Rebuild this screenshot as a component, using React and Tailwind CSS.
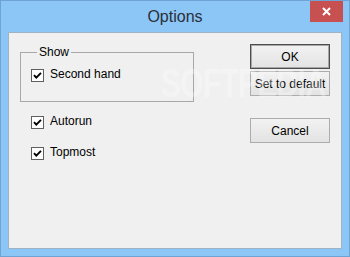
import React from "react";

function Check() {
  return (
    <span className="mt-[2px] flex h-[13px] w-[13px] shrink-0 items-center justify-center border border-[#5f5f5f] bg-white">
      <svg width="9" height="9" viewBox="0 0 9 9">
        <path d="M1 4.2 L3.3 6.6 L8 1.8" fill="none" stroke="#000" strokeWidth="1.9" />
      </svg>
    </span>
  );
}

function Row({ label }) {
  return (
    <div className="flex items-start gap-[6px] leading-[14px]">
      <Check />
      <span>{label}</span>
    </div>
  );
}

function Btn({ children, def }) {
  return (
    <div
      className={
        "flex h-[25px] w-[80px] items-center justify-center bg-gradient-to-b from-[#f2f2f2] to-[#e3e3e3] border " +
        (def ? "border-[#4d4d4d] shadow-[inset_0_0_0_1px_#a8a8a8]" : "border-[#acacac]")
      }
    >
      {children}
    </div>
  );
}

export default function App() {
  return (
    <div
      className="relative flex h-[257px] w-[350px] flex-col overflow-hidden border border-[#6fa3d3] bg-[#8cc6f7] text-[12px] leading-[14px] text-[#000]"
      style={{ fontFamily: '"Liberation Sans", Arial, sans-serif' }}
    >
      <div className="relative flex h-[31px] items-center justify-center">
        <span className="text-[16px] leading-[20px] text-[#2a2f38]">Options</span>
        <div className="absolute right-[6px] top-0 flex h-[21px] w-[33px] items-center justify-center bg-[#c75050]">
          <svg width="9" height="9" viewBox="0 0 9 9">
            <path d="M1 1 L8 8 M8 1 L1 8" stroke="#fff" strokeWidth="2" />
          </svg>
        </div>
      </div>
      <div className="mx-[7px] flex h-[217px] border border-[#9fb3c6] bg-[#f0f0f0]">
        <div className="flex flex-col pl-[11px] pt-[12px]">
          <fieldset className="h-[57px] w-[174px] border border-[#a8a8a8] px-[10px] pt-[8px]">
            <legend className="ml-[6px] px-[2px] leading-[14px]">Show</legend>
            <Row label="Second hand" />
          </fieldset>
          <div className="mt-[12px] pl-[11px]">
            <Row label="Autorun" />
          </div>
          <div className="mt-[16px] pl-[11px]">
            <Row label="Topmost" />
          </div>
        </div>
        <div className="ml-auto flex flex-col pr-[11px] pt-[11px]">
          <Btn def>OK</Btn>
          <div className="mt-[2px]">
            <Btn>Set to default</Btn>
          </div>
          <div className="mt-[22px]">
            <Btn>Cancel</Btn>
          </div>
        </div>
      </div>
      <div
        className="pointer-events-none absolute left-[160px] top-[58px] text-[40px] font-bold leading-[48px] tracking-[-1px] text-white opacity-30"
        style={{ transform: "scaleX(0.75)", transformOrigin: "left" }}
      >
        SOFTPEDIA
      </div>
    </div>
  );
}
